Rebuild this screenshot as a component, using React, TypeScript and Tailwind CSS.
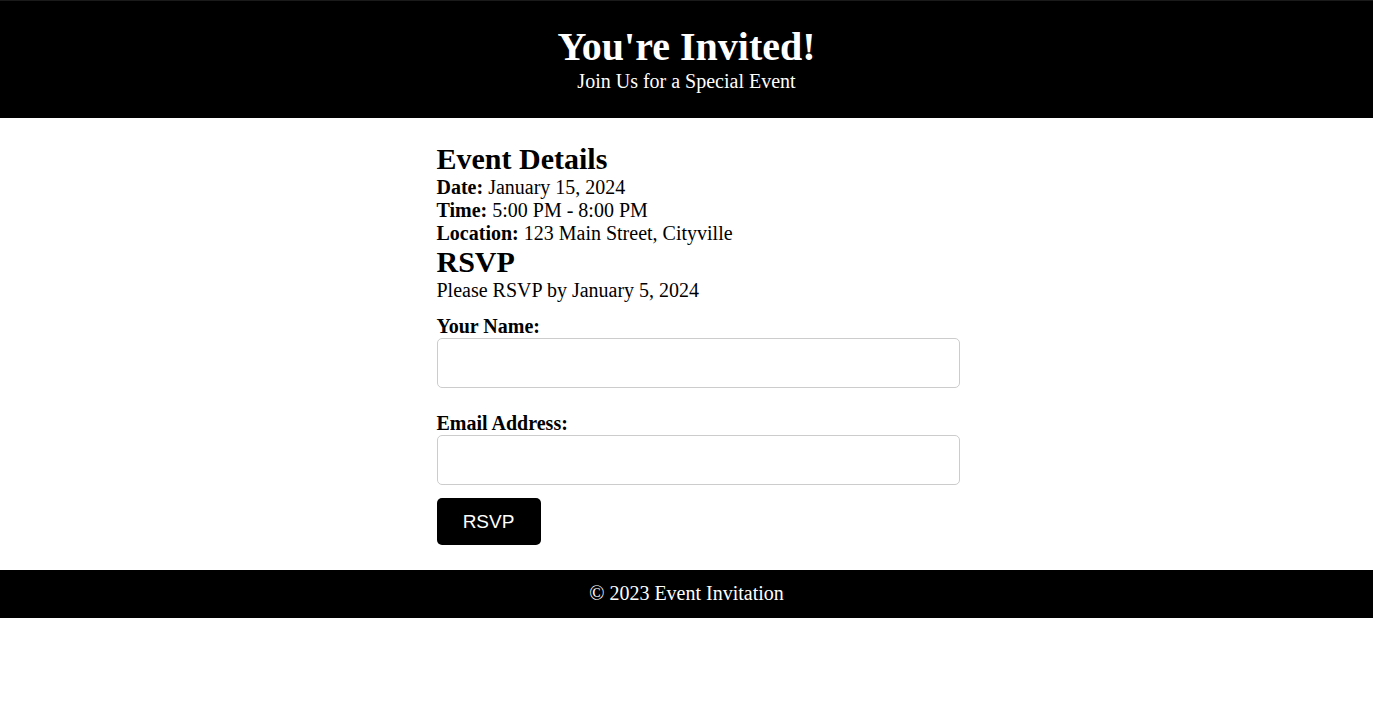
import React, { useState } from 'react';

export default function App() {
  const [name, setName] = useState('');
  const [email, setEmail] = useState('');

  const details = [
    { label: 'Date:', value: 'January 15, 2024' },
    { label: 'Time:', value: '5:00 PM - 8:00 PM' },
    { label: 'Location:', value: '123 Main Street, Cityville' },
  ];

  return (
    <div className="min-h-[705px] bg-white font-['Liberation_Serif','Times_New_Roman',serif] text-[20px] leading-[23px] text-black">
      {/* Header */}
      <header className="bg-black text-white text-center border-t border-[#1a1a1a] pt-[23px] pb-[25px]">
        <h1 className="text-[40px] leading-[46px] font-bold">You're Invited!</h1>
        <p>Join Us for a Special Event</p>
      </header>

      {/* Main */}
      <main className="w-[500px] mx-auto pt-[24px] pb-[25px]">
        <section>
          <h2 className="text-[30px] leading-[34px] font-bold">Event Details</h2>
          {details.map((d) => (
            <p key={d.label}>
              <strong>{d.label}</strong> {d.value}
            </p>
          ))}
        </section>

        <section>
          <h2 className="text-[30px] leading-[34px] font-bold">RSVP</h2>
          <p>Please RSVP by January 5, 2024</p>

          <form className="mt-[13px]" onSubmit={(e) => e.preventDefault()}>
            <label htmlFor="name" className="block font-bold">Your Name:</label>
            <input
              id="name"
              type="text"
              value={name}
              onChange={(e) => setName(e.target.value)}
              className="block w-[523px] h-[50px] px-[10px] border border-[#cccccc] rounded-[5px] outline-none"
            />

            <label htmlFor="email" className="block font-bold mt-[24px]">Email Address:</label>
            <input
              id="email"
              type="email"
              value={email}
              onChange={(e) => setEmail(e.target.value)}
              className="block w-[523px] h-[50px] px-[10px] border border-[#cccccc] rounded-[5px] outline-none"
            />

            <button
              type="submit"
              className="mt-[13px] w-[104px] h-[47px] bg-black text-white rounded-[5px] font-['Liberation_Sans',Arial,sans-serif] text-[19px] leading-[22px]"
            >
              RSVP
            </button>
          </form>
        </section>
      </main>

      {/* Footer */}
      <footer className="bg-black text-white text-center py-[12px] h-[48px]">
        <p>© 2023 Event Invitation</p>
      </footer>
    </div>
  );
}
